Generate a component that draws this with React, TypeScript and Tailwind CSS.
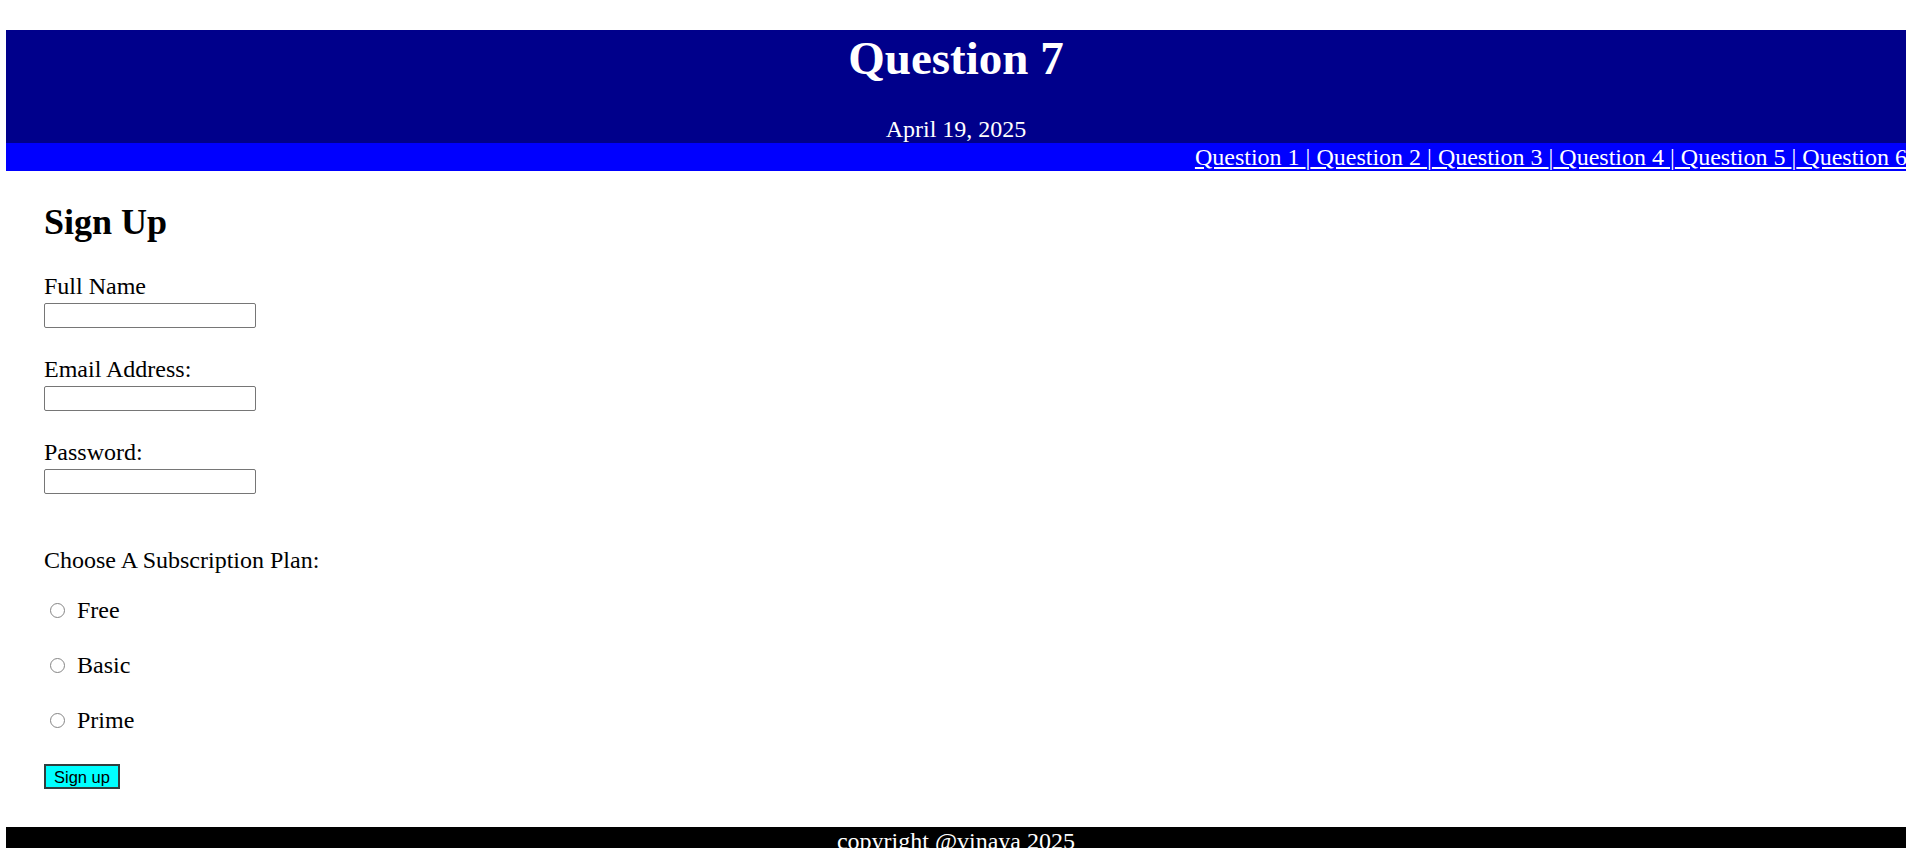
import { useState } from "react";

const LINKS = ["Question 1", "Question 2", "Question 3", "Question 4", "Question 5", "Question 6"];

const PLANS = ["Free", "Basic", "Prime"];

export default function App() {
  const [plan, setPlan] = useState<string>("");

  return (
    <div className="min-h-screen bg-white pt-[30px] px-[6px] font-['Liberation_Serif','Times_New_Roman',serif] text-black">
      {/* header */}
      <header className="bg-[#00008b] text-white text-center pt-[2px] pb-[1px]">
        <h1 className="text-[47px] leading-[52px] font-bold">Question 7</h1>
        <p className="mt-[32px] text-[24px] leading-[26px]">April 19, 2025</p>
      </header>

      {/* nav */}
      <nav className="bg-[#0000ff] text-white text-[24px] leading-[28px] overflow-hidden">
        <div className="text-right whitespace-pre -mr-[1px]">
          {LINKS.map((l, i) => (
            <span key={l}>
              <a href="#" className="underline">
                {i === 0 ? `${l} ` : i === LINKS.length - 1 ? ` ${l}` : ` ${l} `}
              </a>
              {i < LINKS.length - 1 && "|"}
            </span>
          ))}
        </div>
      </nav>

      {/* form */}
      <main className="pl-[38px] pt-[31px]">
        <h2 className="text-[36px] leading-[40px] font-bold">Sign Up</h2>

        <form className="text-[24px] leading-[28px]" onSubmit={(e) => e.preventDefault()}>
          <label className="block mt-[30px]">Full Name</label>
          <input type="text" className="block mt-[3px] w-[212px] h-[25px] border border-[#767676] rounded-[2px] px-1" />

          <label className="block mt-[27px]">Email Address:</label>
          <input type="email" className="block mt-[3px] w-[212px] h-[25px] border border-[#767676] rounded-[2px] px-1" />

          <label className="block mt-[27px]">Password:</label>
          <input type="password" className="block mt-[3px] w-[212px] h-[25px] border border-[#767676] rounded-[2px] px-1" />

          <p className="mt-[52px]">Choose A Subscription Plan:</p>

          <div className="flex flex-col gap-[27px] mt-[22px]">
            {PLANS.map((p) => (
              <label key={p} className="flex items-start h-[28px]">
                <input
                  type="radio"
                  name="plan"
                  checked={plan === p}
                  onChange={() => setPlan(p)}
                  className="appearance-none w-[15px] h-[15px] mt-[7px] ml-[6px] mr-[12px] rounded-full border-[1.5px] border-[#858585] bg-white checked:bg-[#0075ff]"
                />
                {p}
              </label>
            ))}
          </div>

          <button
            type="submit"
            className="block mt-[30px] w-[76px] h-[25px] bg-[#00ffff] border-2 border-[#2f3f3f] font-['Liberation_Sans',Arial,sans-serif] text-[16.5px] leading-[20px] text-black"
          >
            Sign up
          </button>
        </form>
      </main>

      {/* footer */}
      <footer className="mt-[38px] bg-black text-white text-center text-[24px] leading-[28px]">
        copyright @vinaya 2025
      </footer>
    </div>
  );
}
